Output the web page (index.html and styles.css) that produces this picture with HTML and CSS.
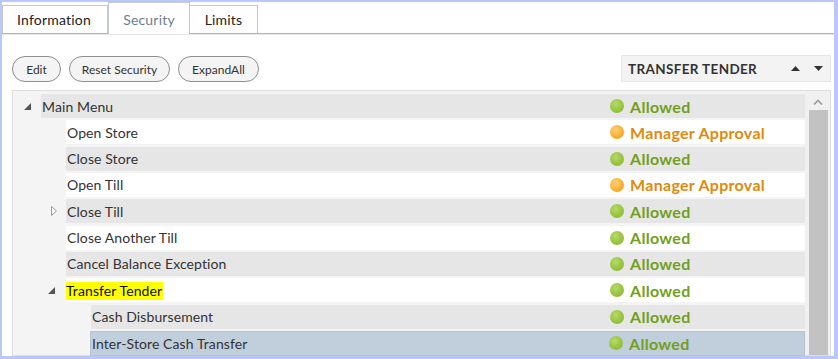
FILE: index.html
```html
<!DOCTYPE html>
<html>
<head>
<meta charset="utf-8">
<link rel="stylesheet" href="styles.css">
</head>
<body>
<div class="window">
  <div class="tabs">
    <div class="tab">Information</div>
    <div class="tab active">Security</div>
    <div class="tab">Limits</div>
  </div>
  <div class="content">
    <div class="toolbar">
      <button class="btn btn-edit">Edit</button>
      <button class="btn btn-reset">Reset Security</button>
      <button class="btn btn-expand">ExpandAll</button>
      <div class="spacer"></div>
      <div class="select">
        <span class="select-text">TRANSFER TENDER</span>
        <svg class="arrow" width="9" height="5" viewBox="0 0 9 5"><polygon points="0,5 4.5,0 9,5" fill="#333"/></svg>
        <svg class="arrow" width="9" height="5" viewBox="0 0 9 5"><polygon points="0,0 4.5,5 9,0" fill="#333"/></svg>
      </div>
    </div>
    <div class="tree">
      <div class="rows">
        <div class="row lvl0">
          <span class="exp"><svg width="7" height="7" viewBox="0 0 7 7"><polygon points="7,0 7,7 0,7" fill="#555"/></svg></span>
          <div class="cell even"><span class="name">Main Menu</span><span class="status ok"><i class="dot green"></i>Allowed</span></div>
        </div>
        <div class="row lvl1">
          <span class="exp"></span>
          <div class="cell odd"><span class="name">Open Store</span><span class="status mgr"><i class="dot orange"></i>Manager Approval</span></div>
        </div>
        <div class="row lvl1">
          <span class="exp"></span>
          <div class="cell even"><span class="name">Close Store</span><span class="status ok"><i class="dot green"></i>Allowed</span></div>
        </div>
        <div class="row lvl1">
          <span class="exp"></span>
          <div class="cell odd"><span class="name">Open Till</span><span class="status mgr"><i class="dot orange"></i>Manager Approval</span></div>
        </div>
        <div class="row lvl1">
          <span class="exp exp-col"><svg width="7" height="10" viewBox="0 0 7 10"><polygon points="0.5,0.5 5.5,5 0.5,9.5" fill="#fff" stroke="#9a9a9a" stroke-width="1"/></svg></span>
          <div class="cell even"><span class="name">Close Till</span><span class="status ok"><i class="dot green"></i>Allowed</span></div>
        </div>
        <div class="row lvl1">
          <span class="exp"></span>
          <div class="cell odd"><span class="name">Close Another Till</span><span class="status ok"><i class="dot green"></i>Allowed</span></div>
        </div>
        <div class="row lvl1">
          <span class="exp"></span>
          <div class="cell even"><span class="name">Cancel Balance Exception</span><span class="status ok"><i class="dot green"></i>Allowed</span></div>
        </div>
        <div class="row lvl1">
          <span class="exp exp-tt"><svg width="7" height="7" viewBox="0 0 7 7"><polygon points="7,0 7,7 0,7" fill="#555"/></svg></span>
          <div class="cell odd"><span class="name"><span class="hl">Transfer Tender</span></span><span class="status ok"><i class="dot green"></i>Allowed</span></div>
        </div>
        <div class="row lvl2">
          <span class="exp"></span>
          <div class="cell even"><span class="name">Cash Disbursement</span><span class="status ok"><i class="dot green"></i>Allowed</span></div>
        </div>
        <div class="row lvl2">
          <span class="exp"></span>
          <div class="cell selected"><span class="name">Inter-Store Cash Transfer</span><span class="status ok"><i class="dot green"></i>Allowed</span></div>
        </div>
      </div>
      <div class="scrollbar">
        <div class="sb-up"><svg width="10" height="6" viewBox="0 0 10 6"><polyline points="1,5.5 5,1.5 9,5.5" fill="none" stroke="#9a9a9a" stroke-width="1.6"/></svg></div>
        <div class="sb-thumb"></div>
      </div>
    </div>
  </div>
</div>
</body>
</html>
```
FILE: styles.css
```css
html, body {
  margin: 0;
  padding: 0;
  background: #fff;
}
body {
  font-family: Lato, "Open Sans", sans-serif;
  color: #333;
}
.window {
  box-sizing: border-box;
  width: 838px;
  height: 359px;
  border: 2px solid #bac7f8;
  border-right-width: 4px;
  border-bottom-width: 3px;
  display: flex;
  flex-direction: column;
  overflow: hidden;
  background: #fff;
}
.tabs {
  display: flex;
  align-items: flex-end;
  height: 31px;
  border-bottom: 1px solid #aeb5bd;
  box-shadow: 0 1px 0 #e4e6e8;
  flex: none;
}
.tab {
  box-sizing: border-box;
  height: 28px;
  border: 1px solid #c3c8cd;
  border-bottom: none;
  padding: 0 14px;
  font-size: 14px;
  letter-spacing: 0.2px;
  line-height: 27px;
  color: #222;
  background: #fff;
}
.tab:first-child {
  width: 106px;
  border-left-color: #c3c8cd;
}
.tab + .tab {
  border-left: none;
}
.tab.active {
  height: 32px;
  margin-bottom: -1px;
  width: 82px;
  text-align: center;
  padding: 0;
  line-height: 33px;
  color: #6e7e8b;
  border-left: 1px solid #c3c8cd;
  border-right: 1px solid #c3c8cd;
  position: relative;
  z-index: 1;
}
.tab:last-child {
  width: 68px;
  text-align: center;
  padding: 0;
  border-left: none;
}
.content {
  flex: 1;
  display: flex;
  flex-direction: column;
  min-height: 0;
}
.toolbar {
  display: flex;
  align-items: center;
  margin: 21px 3px 0 10px;
  height: 27px;
  flex: none;
}
.btn {
  box-sizing: border-box;
  height: 26px;
  border: 1px solid #8e8e8e;
  border-radius: 13px;
  background: #f4f4f4;
  font-family: Lato, "Open Sans", sans-serif;
  font-size: 12px;
  color: #333;
  padding: 0;
  margin-right: 8px;
  margin-top: 1px;
}
.btn-edit { width: 49px; }
.btn-reset { width: 101px; }
.btn-expand { width: 81px; }
.spacer { flex: 1; }
.select {
  box-sizing: border-box;
  width: 210px;
  height: 27px;
  background: #f3f3f3;
  border: 1px solid #e6e6e6;
  display: flex;
  align-items: center;
  padding-left: 6px;
}
.select-text {
  font-weight: bold;
  font-size: 13.5px;
  color: #333;
  letter-spacing: 0.35px;
  flex: 1;
}
.arrow {
  margin-right: 14px;
}
.arrow + .arrow {
  margin-right: 7px;
}
.tree {
  flex: 1;
  margin: 8px 3px 0 10px;
  border: 1px solid #dedede;
  background: #f4f4f4;
  display: flex;
  min-height: 0;
}
.rows {
  flex: 1;
  padding-top: 3px;
}
.row {
  display: flex;
  height: 24px;
  margin-bottom: 2.33px;
}
.lvl1 { padding-left: 25px; }
.lvl2 { padding-left: 50px; }
.exp {
  width: 28px;
  flex: none;
  display: flex;
  align-items: center;
  justify-content: center;
}
.exp svg { display: block; }
.exp-col { padding-left: 4px; box-sizing: border-box; }
.exp-tt { padding-right: 1px; box-sizing: border-box; }
.cell {
  flex: 1;
  display: flex;
  align-items: center;
  padding-left: 1px;
  font-size: 14px;
  letter-spacing: 0.1px;
  color: #333;
}
.cell.even { background: #e6e6e6; }
.cell.odd { background: #fff; }
.cell.selected {
  background: #c1cfdc;
  border: 1px solid #b3c3d2;
  margin-left: -1px;
  margin-bottom: -1px;
}
.name {
  flex: 1;
  white-space: nowrap;
}
.hl {
  background: #ffff00;
  color: #111;
  padding: 0 1px 1px 0;
  margin-left: -1px;
}
.status {
  width: 195px;
  display: flex;
  align-items: center;
  font-weight: bold;
  font-size: 16px;
  letter-spacing: 0.3px;
  white-space: nowrap;
}
.status.ok { color: #72a01b; }
.status.mgr { color: #e08a0c; }
.dot {
  width: 14px;
  height: 14px;
  border-radius: 50%;
  margin-right: 6px;
  flex: none;
}
.dot.green {
  background: radial-gradient(circle at 40% 35%, #b7da6c 0%, #9cc845 45%, #86b52e 100%);
}
.dot.orange {
  background: radial-gradient(circle at 40% 35%, #ffd37a 0%, #fbb23a 50%, #f09a12 100%);
}
.scrollbar {
  width: 25px;
  flex: none;
  background: #f0f0f0;
  display: flex;
  flex-direction: column;
  align-items: center;
  padding-left: 1px;
  box-sizing: border-box;
}
.sb-up {
  height: 19px;
  display: flex;
  align-items: center;
  justify-content: center;
  padding-top: 2px;
  box-sizing: border-box;
}
.sb-thumb {
  width: 19px;
  flex: 1;
  background: #c2c2c2;
}
```
